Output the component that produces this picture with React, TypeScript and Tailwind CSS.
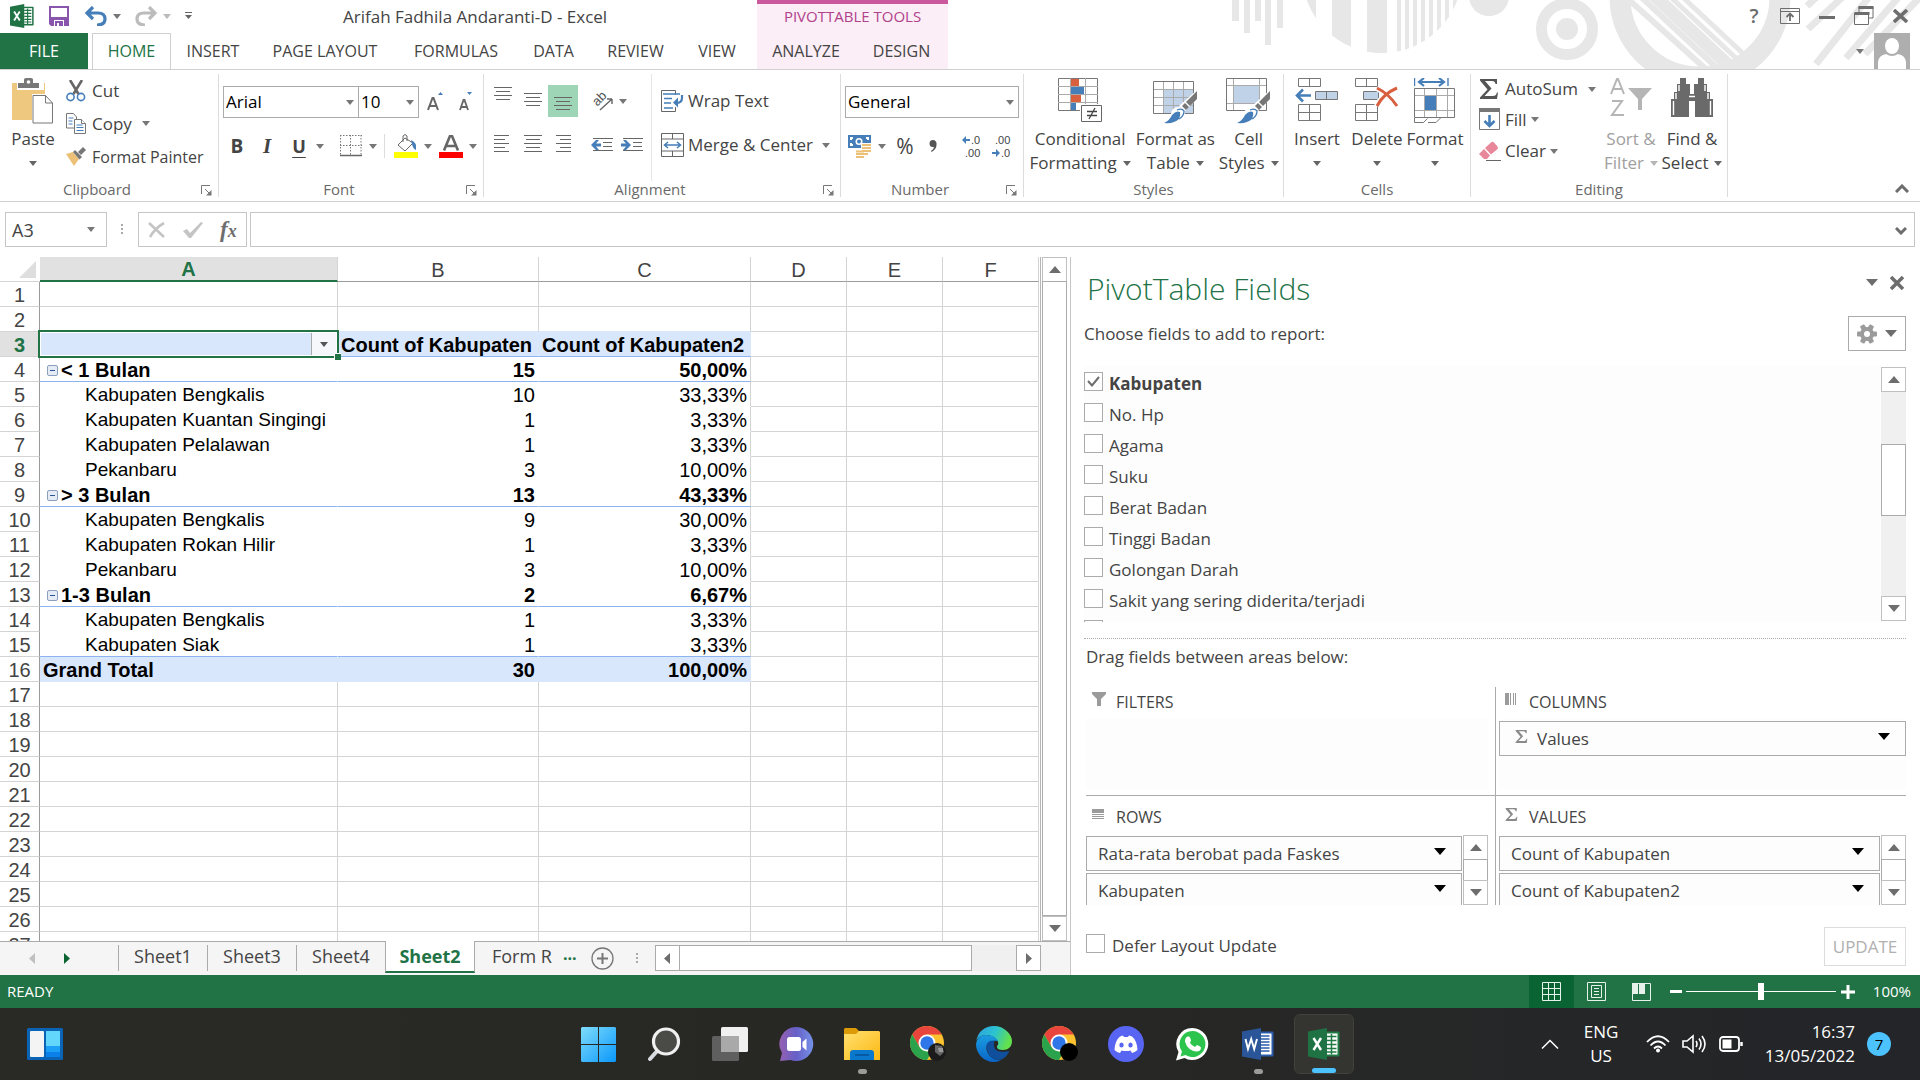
import React from "react";

/* ---------- small shared pieces ---------- */

function Caret({ className = "text-[#777]" }: { className?: string }) {
  return (
    <svg width="8" height="5" viewBox="0 0 8 5" className={`shrink-0 ${className}`} aria-hidden="true">
      <path d="M0 0h8L4 5z" fill="currentColor" />
    </svg>
  );
}

function BigCaret({ className = "text-[#6d6d6d]", up = false }: { className?: string; up?: boolean }) {
  return (
    <svg width="12" height="7" viewBox="0 0 12 7" className={`shrink-0 ${className}`} aria-hidden="true">
      <path d={up ? "M0 7h12L6 0z" : "M0 0h12L6 7z"} fill="currentColor" />
    </svg>
  );
}

function Launcher() {
  return (
    <button aria-label="More options" className="absolute right-[6px] bottom-[1px]">
      <svg width="11" height="11" viewBox="0 0 11 11" fill="none" stroke="#777" aria-hidden="true">
        <path d="M.5 9V.5H9M4 4l5 5" />
        <path d="M10.5 5v5.5H5z" fill="#777" stroke="none" />
      </svg>
    </button>
  );
}

function Group({ label, width, launcher = false, children }: { label: string; width: string; launcher?: boolean; children: React.ReactNode }) {
  return (
    <section aria-label={label} className={`relative flex h-[123px] shrink-0 flex-col border-r border-[#dcdcdc] ${width}`}>
      <div className="flex min-h-0 flex-1">{children}</div>
      <div className={`h-4 text-center text-[15px] leading-4 text-[#6a6a6a] ${launcher ? "pr-6" : ""}`}>{label}</div>
      {launcher && <Launcher />}
    </section>
  );
}

function Combo({ label, value, width }: { label: string; value: string; width: string }) {
  return (
    <div className={`relative h-8 ${width}`}>
      <select aria-label={label} className="h-full w-full appearance-none border border-[#ababab] bg-white pl-[2px] text-[17px] text-black">
        <option>{value}</option>
      </select>
      <span className="pointer-events-none absolute top-[14px] right-[5px]">
        <Caret />
      </span>
    </div>
  );
}

function Tall({ icon, lines, width, caret = "inline", muted = false }: { icon: React.ReactNode; lines: string[]; width: string; caret?: "inline" | "below"; muted?: boolean }) {
  return (
    <button className={`flex flex-col items-center pt-[4px] text-[17px] leading-6 ${width} ${muted ? "text-[#a0a0a0]" : "text-[#444]"}`}>
      <span className="flex h-[49px] items-start">{icon}</span>
      <span className="whitespace-nowrap">{lines[0]}</span>
      <span className="flex h-6 items-center gap-[6px] whitespace-nowrap">
        {caret === "inline" && lines[1]}
        <Caret className={muted ? "text-[#b5b5b5]" : "text-[#666]"} />
      </span>
    </button>
  );
}

function VSep() {
  return <span className="h-6 w-px shrink-0 bg-[#dcdcdc]" />;
}

/* ---------- application icons ---------- */

function OfficeIcon({ letter, dark, mid, size = 32 }: { letter: "X" | "W"; dark: string; mid: string; size?: number }) {
  return (
    <svg width={size} height={size} viewBox="0 0 32 32" aria-hidden="true">
      <rect x="15" y="3.5" width="16.5" height="25" rx="1" fill={mid} />
      <rect x="18" y="5.5" width="11.5" height="21" fill="#fff" />
      {letter === "X" ? (
        <path d="M19 8.500h9.500M19 12.500h9.500M19 16.500h9.500M19 20.500h9.500M19 24h9.500M23.500 6v20.500" stroke={mid} strokeWidth="1.5" />
      ) : (
        <path d="M19 8h8.500M19 11h8.500M19 14h8.500M19 17h8.500M19 20h8.500M19 23h8.500" stroke={mid} strokeWidth="1.4" />
      )}
      <path d="M0 3.500L19 0v32L0 28.500z" fill={dark} />
      {letter === "X" ? (
        <path d="M5.500 10l7.500 12M13 10L5.500 22" stroke="#fff" strokeWidth="2.400" />
      ) : (
        <path d="M3.500 11l2.500 10L9.200 11l3 10L15 11" stroke="#fff" strokeWidth="1.900" fill="none" />
      )}
    </svg>
  );
}

function PasteIcon() {
  return (
    <svg width="42" height="46" viewBox="0 0 42 46" aria-hidden="true">
      <path d="M0 5h33v37H0z" fill="#edc87e" />
      <path d="M5 4h27v8H5z" fill="#fff" />
      <path d="M6 10V5h6V1.500Q12 0 14 0h5q2 0 2 1.500V5h6v5z" fill="#777" />
      <circle cx="16.500" cy="4" r="1.800" fill="#fff" />
      <path d="M20 16h14l8 8v22H20z" fill="#fff" />
      <path d="M21 17.500h12.500l7 7.500v20H21zM33.500 17.500V25h7" fill="#fff" stroke="#777" />
    </svg>
  );
}

function CutIcon() {
  return (
    <svg width="20" height="22" viewBox="0 0 20 22" fill="none" aria-hidden="true">
      <path d="M4 0l8.500 14M16 0L7.500 14" stroke="#666" strokeWidth="2.600" />
      <circle cx="4.500" cy="17" r="3.600" stroke="#457eb8" strokeWidth="1.600" />
      <circle cx="15" cy="17" r="3.600" stroke="#457eb8" strokeWidth="1.600" />
    </svg>
  );
}

function CopyIcon() {
  return (
    <svg width="20" height="21" viewBox="0 0 20 21" fill="#fff" stroke="#777" aria-hidden="true">
      <path d="M.5.500h7l3 3.500v11H.5z" />
      <path d="M8.500 6.500h7l4 4v10h-11z" />
      <path d="M15.500 6.500v4h4" />
      <path d="M2.500 5h5M2.500 8h4M2.500 11h4M10.500 12h6M10.500 14.500h7M10.500 17.500h7" stroke="#457eb8" />
    </svg>
  );
}

function PainterIcon() {
  return (
    <svg width="20" height="19" viewBox="0 0 20 19" aria-hidden="true">
      <path d="M0 7l7-2 6 7-5 7z" fill="#edc078" />
      <path d="M7 5l2-2 7 7-2.500 2.500z" fill="#777" />
      <path d="M12 5l5-5 3 3-5 5z" fill="#777" />
    </svg>
  );
}

function Lines({ rows, width = 18, align = "center" }: { rows: number[]; width?: number; align?: "left" | "center" | "right" }) {
  return (
    <svg width={width} height={rows.length * 4} viewBox={`0 0 ${width} ${rows.length * 4}`} aria-hidden="true">
      {rows.map((w, i) => (
        <rect key={i} x={align === "left" ? 0 : align === "right" ? width - w : Math.floor((width - w) / 2)} y={i * 4} width={w} height="1" fill="#666" />
      ))}
    </svg>
  );
}

function IndentIcon({ dir }: { dir: "in" | "out" }) {
  return (
    <svg width="22" height="14" viewBox="0 0 22 14" aria-hidden="true">
      <path d="M2 .500h20M12 4.500h9M12 8.500h9M2 12.500h20" stroke="#666" />
      <path d={dir === "out" ? "M0 7l5-5h3L5 5.500h5v3H5L8 12H5z" : "M10 7L5 2H2l3 3.500H0v3h5L2 12h3z"} fill="#457eb8" />
    </svg>
  );
}

function OrientIcon() {
  return (
    <svg width="22" height="24" viewBox="0 0 22 24" aria-hidden="true">
      <text x="2" y="14" transform="rotate(-45 8 12)" fontSize="13" fontFamily="Liberation Sans, sans-serif" fill="#555">ab</text>
      <path d="M8 21L20 10M20 10h-5M20 10v5" stroke="#666" strokeWidth="1.400" fill="none" />
    </svg>
  );
}

function WrapIcon() {
  return (
    <svg width="23" height="23" viewBox="0 0 23 23" fill="none" aria-hidden="true">
      <path d="M14.500 5V.500H.500v21h14V17" stroke="#666" />
      <path d="M2 4h17M3 8.500h8M3 13h7M3 18h9" stroke="#457eb8" strokeWidth="1.400" />
      <path d="M21 5v3q0 5-6 5" stroke="#457eb8" strokeWidth="2.200" />
      <path d="M12 12.500l5-5v10z" fill="#457eb8" />
    </svg>
  );
}

function MergeIcon() {
  return (
    <svg width="24" height="24" viewBox="0 0 24 24" fill="none" aria-hidden="true">
      <path d="M.500.500h22v23H.500zM.500 6h22M.500 18h22M11.500.500V6M11.500 18v5.500" stroke="#666" />
      <path d="M3 12h17M7 9l-3.500 3L7 15M16 9l3.500 3L16 15" stroke="#457eb8" strokeWidth="1.500" />
    </svg>
  );
}

function BorderIcon() {
  return (
    <svg width="22" height="22" viewBox="0 0 22 22" fill="none" aria-hidden="true">
      <path d="M.500 0v20M21 0v20M0 .500h22M10.500 0v20M0 10.500h22" stroke="#777" strokeDasharray="1.500 1.500" />
      <path d="M0 20.500h22" stroke="#666" strokeWidth="1.500" />
    </svg>
  );
}

function BucketIcon() {
  return (
    <svg width="24" height="24" viewBox="0 0 24 24" aria-hidden="true">
      <path d="M11 4L4 11l7 6 8-8z" fill="#fff" stroke="#666" />
      <path d="M9 8V2q2-3 4 0v5" fill="none" stroke="#666" />
      <path d="M17 6q6 2 5 10-3-1-4-6z" fill="#457eb8" />
      <rect y="18" width="24" height="6" fill="#ff0" />
    </svg>
  );
}

function FontColorIcon() {
  return (
    <svg width="24" height="23" viewBox="0 0 24 23" aria-hidden="true">
      <path d="M5 15.500L11 1h2l6 14.500M7.500 11h9" fill="none" stroke="#666" strokeWidth="2.600" />
      <rect y="17" width="24" height="6" fill="#f00" />
    </svg>
  );
}

function MoneyIcon() {
  return (
    <svg width="23" height="23" viewBox="0 0 23 23" aria-hidden="true">
      <rect width="23" height="13" fill="#457eb8" />
      <path d="M2 2h3v2H4v1H2zM21 2h-3v2h1v1h2zM2 11h3V9H4V8H2z" fill="#fff" />
      <circle cx="11" cy="6.500" r="3.500" fill="#fff" />
      <circle cx="11" cy="6.500" r="2" fill="#457eb8" />
      <path d="M13 8h10v15H7v-8h6z" fill="#fff" />
      <path d="M14 10h9M14 13h9M14 16h9M14 19h6M8 16.500h8M8 19h8M8 22h8" stroke="#edc078" strokeWidth="2" />
    </svg>
  );
}

function DecimalIcon({ more }: { more: boolean }) {
  return (
    <svg width="20" height="28" viewBox="0 0 20 28" fontSize="11" fontFamily="Liberation Sans, sans-serif" fill="#444" aria-hidden="true">
      <text x={more ? 9 : 3} y="12">{more ? ".0" : ".00"}</text>
      <text x={more ? 3 : 9} y="25">{more ? ".00" : ".0"}</text>
      <path d={more ? "M0 8l4-4v3h4v2H4v3z" : "M8 21l-4-4v3H0v2h4v3z"} fill="#457eb8" />
    </svg>
  );
}

function CondIcon() {
  return (
    <svg width="44" height="44" viewBox="0 0 44 44" fill="none" aria-hidden="true">
      <path d="M.500.500h39v32H.500z" fill="#fff" stroke="#777" />
      <path d="M12.500 0v32M27.500 0v32M0 8.500h40M0 16.500h40M0 24.500h40" stroke="#aaa" />
      <path d="M13 1h8v7h-8zM13 17h10v7H13z" fill="#d9603f" />
      <path d="M13 9h13v7H13zM13 25h5v7h-5z" fill="#457eb8" />
      <path d="M22 26h22v18H22z" fill="#fff" />
      <path d="M23.500 27.500h20v16h-20z" fill="#fff" stroke="#666" />
      <path d="M29 33.500h10M29 37.500h10M37 30l-6 11" stroke="#444" strokeWidth="1.300" />
    </svg>
  );
}

function Brush() {
  return (
    <>
      <path d="M44 12v9L32 33l-6-5z" fill="#fff" />
      <path d="M44 13v8l-7 7-4-4z" fill="#777" />
      <path d="M32 25l4 4-3 3-4-4z" fill="#777" />
      <circle cx="25" cy="36" r="7" fill="#fff" />
      <path d="M24 32q5-2 7 1 0 5-5 8" fill="none" stroke="#457eb8" strokeWidth="1.300" />
      <path d="M11 45q6-3 8-8 4-5 8-3 1 3-1 7-5 5-15 4z" fill="#457eb8" />
    </>
  );
}

function FormatTableIcon() {
  return (
    <svg width="45" height="46" viewBox="0 0 45 46" fill="none" aria-hidden="true">
      <path d="M.500 3.500h40v32H.500z" fill="#fff" stroke="#777" />
      <path d="M11 12h29v23H11z" fill="#c0d2e8" />
      <path d="M10.500 4v31M20.500 4v31M30.500 4v31M1 11.500h39M1 19.500h39M1 27.500h39" stroke="#aaa" />
      <Brush />
    </svg>
  );
}

function CellStylesIcon() {
  return (
    <svg width="45" height="46" viewBox="0 0 45 46" fill="none" aria-hidden="true">
      <path d="M.500.500h40v32H.500z" fill="#fff" stroke="#777" />
      <path d="M7.500 1v31M33.500 1v31M1 7.500h39M1 25.500h39" stroke="#aaa" />
      <path d="M8 8h25v17H8z" fill="#c0d2e8" />
      <Brush />
    </svg>
  );
}

function InsertIcon() {
  return (
    <svg width="44" height="44" viewBox="0 0 44 44" fill="#fff" stroke="#777" aria-hidden="true">
      <path d="M3.500.500h22v8h-22zM14.500.500v8M3.500 26.500h22v16h-22zM14.500 26.500v16M3.500 34.500h22" />
      <path d="M20.500 13.500h22v8h-22zM31.500 13.500v8" fill="#c0d2e8" />
      <path d="M16 17.500H2M8 11.500l-6 6 6 6" fill="none" stroke="#457eb8" strokeWidth="2.600" />
    </svg>
  );
}

function DeleteIcon() {
  return (
    <svg width="44" height="44" viewBox="0 0 44 44" fill="#fff" stroke="#777" aria-hidden="true">
      <path d="M.500.500h22v8h-22zM11.500.500v8M.500 26.500h22v16h-22zM11.500 26.500v16M.500 34.500h22" />
      <path d="M8.500 13.500h15v8h-15z" fill="#c0d2e8" />
      <path d="M22 10q12 6 20 18M42 10Q28 16 22 28" fill="none" stroke="#fff" strokeWidth="6" />
      <path d="M22 10q12 6 20 18M42 10Q28 16 22 28" fill="none" stroke="#d9603f" strokeWidth="3" />
    </svg>
  );
}

function FormatIcon() {
  return (
    <svg width="42" height="46" viewBox="0 0 42 46" fill="none" aria-hidden="true">
      <path d="M.500 0v8M34 0v8" stroke="#457eb8" strokeWidth="1.400" />
      <path d="M5 4h25M10 0L5 4l5 4M25 0l5 4-5 4" stroke="#457eb8" strokeWidth="2.200" />
      <path d="M.500 10.500h40v29H.500z" fill="#fff" stroke="#777" />
      <path d="M10.500 11v28M22.500 11v28M33.500 11v28M1 17.500h39M1 32.500h39" stroke="#aaa" />
      <path d="M11 18h11v14H11z" fill="#457eb8" />
      <path d="M.500 40v4.500h9l4-4M14 44.500h8l5-5" stroke="#777" />
    </svg>
  );
}

function SortIcon() {
  return (
    <svg width="42" height="40" viewBox="0 0 42 40" fill="none" stroke="#b5b5b5" strokeWidth="2" aria-hidden="true">
      <path d="M1 16L7 1h1l6 15M3.500 11h8M2 23h10L2 37h12" />
      <path d="M18 10h24L32 21v11h-4V21z" fill="#b5b5b5" stroke="none" />
    </svg>
  );
}

function FindIcon() {
  return (
    <svg width="42" height="39" viewBox="0 0 42 39" fill="#6a6a6a" aria-hidden="true">
      <path d="M9 0h6v6h4v10h4V6h4V0h6v6h3v8h3v7h3v18H24V23h-6v16H0V21h3v-7h3V6h3z" />
      <path d="M8 7v6M5 15v6M2.500 23v14M34 7v6M37 15v6M39.500 23v14M18 18.500h6" stroke="#fff" strokeWidth="1.400" />
    </svg>
  );
}

function SigmaIcon({ size, color }: { size: number; color: string }) {
  return (
    <svg width={size} height={size} viewBox="0 0 18 20" fill={color} aria-hidden="true">
      <path d="M0 0h17v5h-1.500Q15 2 12 2H5l6.500 7.500L4.500 17H13q3 0 4-3.500h1L17 20H0v-1.500L7.500 10.500 0 1.500z" />
    </svg>
  );
}

function FillIcon() {
  return (
    <svg width="22" height="23" viewBox="0 0 22 23" fill="none" aria-hidden="true">
      <path d="M.500.500h20v21H.500z" fill="#fff" stroke="#777" />
      <path d="M0 0h21v4H0z" fill="#777" />
      <path d="M10.500 7v11M5.500 13l5 5 5-5" stroke="#457eb8" strokeWidth="2.600" />
    </svg>
  );
}

function EraserIcon() {
  return (
    <svg width="22" height="20" viewBox="0 0 22 20" aria-hidden="true">
      <path d="M12 1.500q1.500-1.500 3 0l3.500 4q1 1.500 0 2.500L12 13.500 6 7z" fill="#e8869a" />
      <path d="M5 8l6 6.500L8 18H5l-5-5z" fill="#e8869a" />
      <path d="M7 19.500h15" stroke="#666" />
    </svg>
  );
}

/* ---------- header ---------- */

function Decoration() {
  return (
    <svg className="pointer-events-none absolute top-0 right-0" width="700" height="69" viewBox="1220 0 700 69" aria-hidden="true">
      <defs>
        <clipPath id="discA"><circle cx="1382" cy="-27" r="80" /></clipPath>
        <clipPath id="discB"><circle cx="1700" cy="-3" r="70" /></clipPath>
      </defs>
      <g fill="#e7e7e7">
        <path d="M1232 0h7v21h-7zM1244 0h6v33h-6zM1255 0h6v21h-6zM1265 0h6v45h-6zM1277 0h6v28h-6z" />
        <path clipPath="url(#discA)" d="M1300 0h16v60h-16zM1332 0h19v60h-19zM1367 0h20v60h-20zM1397 0h4v60h-4zM1405 0h4v60h-4zM1413 0h4v60h-4zM1421 0h4v60h-4zM1429 0h4v60h-4zM1437 0h4v60h-4zM1445 0h4v60h-4zM1453 0h4v60h-4z" />
        <circle cx="1489" cy="-4" r="20" />
        <circle cx="1567" cy="29" r="11" />
      </g>
      <g fill="none" stroke="#e7e7e7">
        <circle cx="1567" cy="29" r="25.500" strokeWidth="11" />
        <circle cx="1700" cy="-3" r="80" strokeWidth="21" />
        <g clipPath="url(#discB)">
          <path d="M1618-10l100 90M1638-6l96 90" strokeWidth="6" />
          <path d="M1646-12l96 90" strokeWidth="13" />
          <path d="M1663-10l90 84M1675-10l90 84" strokeWidth="5" />
        </g>
        <g strokeWidth="7">
          <path d="M1822-8l-15 14M1848-8l-40 37M1873-8l-57 72M1903-8l-57 66M1925-8l-60 62" />
        </g>
      </g>
    </svg>
  );
}

const TABS: [string, string][] = [
  ["INSERT", "w-[84px]"],
  ["PAGE LAYOUT", "w-[140px]"],
  ["FORMULAS", "w-[122px]"],
  ["DATA", "w-[73px]"],
  ["REVIEW", "w-[91px]"],
  ["VIEW", "w-[72px]"],
];

function Header() {
  return (
    <header className="relative flex h-[70px] shrink-0 border-b border-[#d0d0d0] text-[#444]">
      <Decoration />
      <div className="flex w-[757px] shrink-0 flex-col">
        <div className="flex h-[33px] items-center pl-[10px]">
          <OfficeIcon letter="X" dark="#217346" mid="#217346" size={24} />
          <div className="ml-[15px] flex w-[294px] items-center">
            <button aria-label="Save">
              <svg width="20" height="20" viewBox="0 0 20 20" aria-hidden="true">
                <path d="M0 0h20v20H2l-2-2z" fill="#8a56ad" />
                <path d="M2 2h16v9H2zM5 14h10v6H5z" fill="#fff" />
                <path d="M6 15h8v5H6z" fill="#8a56ad" />
                <path d="M8 17h2v3H8z" fill="#fff" />
              </svg>
            </button>
            <button aria-label="Undo" className="ml-4 flex items-center gap-[6px]">
              <svg width="22" height="20" viewBox="0 0 22 20" fill="none" stroke="#457eb8" strokeWidth="3.200" aria-hidden="true">
                <path d="M2 7h11q7 0 7 6t-8 6M8 1L2 7l6 6" />
              </svg>
              <Caret />
            </button>
            <button aria-label="Redo" className="ml-[14px] flex items-center gap-[6px]">
              <svg width="22" height="20" viewBox="0 0 22 20" fill="none" stroke="#bcbcbc" strokeWidth="3.200" aria-hidden="true">
                <path d="M20 7H9q-7 0-7 6t8 6M14 1l6 6-6 6" />
              </svg>
              <Caret className="text-[#bcbcbc]" />
            </button>
            <button aria-label="Customize toolbar" className="ml-[14px]">
              <svg width="7" height="8" viewBox="0 0 7 8" fill="#666" aria-hidden="true">
                <path d="M0 0h7v1H0zM0 3h7L3.500 7z" />
              </svg>
            </button>
          </div>
          <h1 className="whitespace-nowrap text-[17px]">Arifah Fadhila Andaranti-D - Excel</h1>
        </div>
        <nav className="flex h-[37px] text-[16px]">
          <button className="w-[88px] bg-[#217346] text-white">FILE</button>
          <button className="ml-1 w-[79px] border border-b-0 border-[#d0d0d0] bg-white text-[#217346]">HOME</button>
          {TABS.map(([t, w]) => (
            <button key={t} className={`h-9 whitespace-nowrap ${w}`}>{t}</button>
          ))}
        </nav>
      </div>
      <div className="flex w-[191px] shrink-0 flex-col border-t-4 border-[#c9589c] bg-[#fbeef6]">
        <div className="flex h-[29px] items-center justify-center pb-1 text-[15px] text-[#b0418a]">PIVOTTABLE TOOLS</div>
        <div className="flex h-9 text-[16px]">
          <button className="w-[98px]">ANALYZE</button>
          <button className="w-[93px]">DESIGN</button>
        </div>
      </div>
      <div className="relative flex flex-1 flex-col items-end">
        <div className="flex h-[31px] items-center gap-[19px] pr-[12px] text-[#6d6d6d]">
          <button aria-label="Help" className="w-[14px] text-[20px] font-semibold leading-none">?</button>
          <button aria-label="Ribbon display options">
            <svg width="20" height="16" viewBox="0 0 20 16" fill="none" stroke="#6d6d6d" aria-hidden="true">
              <path d="M.500.500h19v15H.500zM.500 3.500h19" />
              <path d="M10 13V6M6.500 9L10 5.500 13.500 9" strokeWidth="1.800" />
            </svg>
          </button>
          <button aria-label="Minimize" className="pt-1">
            <svg width="16" height="4" aria-hidden="true"><path d="M0 0h16v3H0z" fill="#6d6d6d" /></svg>
          </button>
          <button aria-label="Restore">
            <svg width="20" height="19" viewBox="0 0 20 19" fill="none" stroke="#6d6d6d" aria-hidden="true">
              <path d="M5 6V1h14v11h-4" />
              <path d="M4.500 1.500h15M.500 7.500h15" strokeWidth="3" />
              <path d="M.500 7v11.500h14V7" />
            </svg>
          </button>
          <button aria-label="Close">
            <svg width="15" height="14" viewBox="0 0 15 14" stroke="#6d6d6d" strokeWidth="3.500" aria-hidden="true"><path d="M1 1l13 12M14 1L1 13" /></svg>
          </button>
        </div>
        <button aria-label="Account" className="mt-[2px] flex h-9 items-center gap-[10px] pr-[10px]">
          <Caret />
          <svg width="36" height="36" viewBox="0 0 36 36" aria-hidden="true">
            <path d="M0 0h36v36H0z" fill="#aeaeae" />
            <ellipse cx="18" cy="13" rx="7" ry="8" fill="#fff" />
            <path d="M4 36V29q1-7 8-8 6 4 12 0 7 1 8 8v7z" fill="#fff" />
          </svg>
        </button>
      </div>
    </header>
  );
}

/* ---------- ribbon ---------- */

function Ribbon() {
  return (
    <div className="flex h-[132px] shrink-0 items-start border-b border-[#d0d0d0] pt-1 text-[17px] text-[#444]">
      <Group label="Clipboard" width="w-[219px]" launcher>
        <div className="flex pl-1">
          <Tall icon={<PasteIcon />} lines={["Paste"]} width="w-[58px]" caret="below" />
        </div>
        <div className="flex flex-col pl-1">
          <button className="flex h-[33px] items-center gap-[6px]"><CutIcon />Cut</button>
          <button className="flex h-[33px] items-center gap-[6px]"><CopyIcon />Copy<span className="ml-1"><Caret /></span></button>
          <button className="flex h-[33px] items-center gap-[6px] whitespace-nowrap text-[16px]"><PainterIcon />Format Painter</button>
        </div>
      </Group>

      <Group label="Font" width="w-[265px]" launcher>
        <div className="flex w-full flex-col pt-3 pl-1">
          <div className="flex h-8 items-center">
            <Combo label="Font" value="Arial" width="w-[136px]" />
            <div className="-ml-px"><Combo label="Font size" value="10" width="w-[61px]" /></div>
            <button aria-label="Increase font size" className="ml-2 flex w-[17px] items-start">
              <svg width="17" height="22" viewBox="0 0 17 22" fill="none" aria-hidden="true">
                <path d="M1 19L5.500 7h1L11 19M3 15h6" stroke="#666" strokeWidth="2" />
                <path d="M11 4h5l-2.500-3z" fill="#457eb8" />
              </svg>
            </button>
            <button aria-label="Decrease font size" className="ml-[15px] flex items-start">
              <svg width="14" height="22" viewBox="0 0 14 22" fill="none" aria-hidden="true">
                <path d="M1 19L4.500 9h1L9 19M2.500 16h5" stroke="#666" strokeWidth="1.800" />
                <path d="M8 1h5l-2.500 3z" fill="#457eb8" />
              </svg>
            </button>
          </div>
          <div className="mt-3 flex h-8 items-center">
            <button aria-label="Bold" className="w-7 text-[19px] leading-6 font-bold">B</button>
            <button aria-label="Italic" className="w-8 font-['Liberation_Serif',serif] text-[21px] leading-6 font-bold italic">I</button>
            <button aria-label="Underline" className="mr-px w-8 text-[18px] leading-6 font-bold underline underline-offset-4">U</button>
            <Caret />
            <span className="ml-[7px]"><VSep /></span>
            <button aria-label="Borders" className="mr-[7px] ml-[9px] flex items-center gap-[7px]"><BorderIcon /><Caret /></button>
            <VSep />
            <button aria-label="Fill color" className="ml-[9px] flex items-center gap-[6px]"><BucketIcon /><Caret /></button>
            <button aria-label="Font color" className="ml-[7px] flex items-center gap-[6px]"><FontColorIcon /><Caret /></button>
          </div>
        </div>
      </Group>

      <Group label="Alignment" width="w-[357px]" launcher>
        <div className="flex w-[168px] flex-col border-r border-[#e6e6e6] pt-[11px] pl-[10px]">
          <div className="flex h-8 items-center">
            <button aria-label="Top align" className="pb-3"><Lines rows={[18, 14, 18, 14]} /></button>
            <button aria-label="Middle align" className="ml-3"><Lines rows={[18, 14, 18, 14]} /></button>
            <button aria-label="Bottom align" className="ml-[6px] flex h-8 w-[30px] items-end justify-center bg-[#9fd5b7] pb-1"><Lines rows={[18, 14, 18, 14]} /></button>
            <span className="mr-[10px] ml-1"><VSep /></span>
            <button aria-label="Orientation" className="flex items-center gap-[5px]"><OrientIcon /><Caret /></button>
          </div>
          <div className="mt-3 flex h-8 items-center">
            <button aria-label="Align left"><Lines rows={[15, 11, 15, 11, 15]} align="left" /></button>
            <button aria-label="Center" className="ml-3"><Lines rows={[18, 14, 18, 14, 18]} /></button>
            <button aria-label="Align right" className="ml-[11px]"><Lines rows={[15, 11, 15, 11, 15]} align="right" /></button>
            <span className="mr-2 ml-3"><VSep /></span>
            <button aria-label="Decrease indent"><IndentIcon dir="out" /></button>
            <button aria-label="Increase indent" className="ml-2"><IndentIcon dir="in" /></button>
          </div>
        </div>
        <div className="flex flex-col pt-[11px] pl-[9px]">
          <button className="flex h-8 items-center gap-1 whitespace-nowrap"><WrapIcon />Wrap Text</button>
          <button className="mt-3 flex h-8 items-center gap-[3px] whitespace-nowrap"><MergeIcon />Merge &amp; Center<span className="ml-[6px]"><Caret /></span></button>
        </div>
      </Group>

      <Group label="Number" width="w-[183px]" launcher>
        <div className="flex w-full flex-col pt-3 pl-1">
          <Combo label="Number format" value="General" width="w-[174px]" />
          <div className="mt-3 flex h-8 items-center">
            <button aria-label="Accounting format" className="ml-[3px] flex items-center gap-[7px]"><MoneyIcon /><Caret /></button>
            <button aria-label="Percent" className="ml-[9px] w-5 text-[21px] leading-6">%</button>
            <button aria-label="Comma style" className="ml-[14px]">
              <svg width="8" height="12" viewBox="0 0 8 12" fill="#555" aria-hidden="true"><path d="M4 0a3.500 3.500 0 0 0 0 7h1q0 2-3 4l.500 1Q8 9 7.500 4A3.500 3.500 0 0 0 4 0z" /></svg>
            </button>
            <span className="mr-[10px] ml-[15px]"><VSep /></span>
            <button aria-label="Increase decimal"><DecimalIcon more /></button>
            <button aria-label="Decrease decimal" className="ml-[10px]"><DecimalIcon more={false} /></button>
          </div>
        </div>
      </Group>

      <Group label="Styles" width="w-[260px]">
        <Tall icon={<CondIcon />} lines={["Conditional", "Formatting"]} width="w-[113px]" />
        <Tall icon={<FormatTableIcon />} lines={["Format as", "Table"]} width="w-[78px]" />
        <Tall icon={<CellStylesIcon />} lines={["Cell", "Styles"]} width="w-[69px]" />
      </Group>

      <Group label="Cells" width="w-[187px]">
        <Tall icon={<InsertIcon />} lines={["Insert"]} width="w-[66px]" caret="below" />
        <Tall icon={<DeleteIcon />} lines={["Delete"]} width="w-[54px]" caret="below" />
        <Tall icon={<FormatIcon />} lines={["Format"]} width="w-[62px]" caret="below" />
      </Group>

      <Group label="Editing" width="w-[257px]">
        <div className="flex w-[128px] flex-col pl-2">
          <button className="flex h-[30px] items-center gap-[6px] whitespace-nowrap"><span className="flex w-5 justify-center"><SigmaIcon size={20} color="#555" /></span>AutoSum<span className="ml-1"><Caret /></span></button>
          <button className="flex h-[31px] items-center gap-1"><FillIcon />Fill<Caret /></button>
          <button className="flex h-[32px] items-center gap-1"><EraserIcon />Clear<Caret /></button>
        </div>
        <Tall icon={<SortIcon />} lines={["Sort &", "Filter"]} width="w-[64px]" muted />
        <Tall icon={<FindIcon />} lines={["Find &", "Select"]} width="w-[58px]" />
      </Group>
      <button aria-label="Collapse ribbon" className="mr-[11px] mb-2 ml-auto self-end">
        <svg width="14" height="9" viewBox="0 0 14 9" fill="none" stroke="#6d6d6d" strokeWidth="3" aria-hidden="true"><path d="M1 8l6-6 6 6" /></svg>
      </button>
    </div>
  );
}

function FormulaBar() {
  return (
    <div className="flex shrink-0 items-center px-[5px] py-[10px]">
      <div className="relative h-[35px] w-[102px] border border-[#c6c6c6]">
        <input aria-label="Name box" defaultValue="A3" className="h-full w-full pl-[6px] text-[18px] text-[#444] outline-none" />
        <span className="absolute top-[14px] right-[11px]"><Caret /></span>
      </div>
      <svg width="3" height="11" className="mx-[14px]" fill="#aaa" aria-hidden="true"><path d="M0 0h2v2H0zM0 4h2v2H0zM0 8h2v2H0z" /></svg>
      <div className="flex h-[35px] w-[109px] items-center gap-[17px] border border-[#c6c6c6] pl-[9px]">
        <button aria-label="Cancel"><svg width="18" height="16" viewBox="0 0 18 16" stroke="#c4c4c4" strokeWidth="2.600" aria-hidden="true"><path d="M1 1l15 14M16 1Q7 6 2 15" fill="none" /></svg></button>
        <button aria-label="Enter"><svg width="20" height="16" viewBox="0 0 20 16" aria-hidden="true"><path d="M0 9l4-2 3 4L18 0l2 1L8 16H6z" fill="#c4c4c4" /></svg></button>
        <button aria-label="Insert function" className="font-['Liberation_Serif',serif] text-[23px] leading-none font-bold text-[#6d6d6d] italic">f<span className="text-[18px]">x</span></button>
      </div>
      <div className="relative ml-[3px] h-[35px] flex-1 border border-[#c6c6c6]">
        <input aria-label="Formula" className="h-full w-full pr-8 pl-2 outline-none" />
        <svg width="12" height="8" viewBox="0 0 12 8" className="absolute top-[14px] right-[7px]" fill="none" stroke="#6d6d6d" strokeWidth="3" aria-hidden="true"><path d="M1 1l5 5 5-5" /></svg>
      </div>
    </div>
  );
}

/* ---------- worksheet ---------- */

type Kind = "head" | "group" | "item" | "last" | "total";
const PIVOT: Record<number, { kind: Kind; cells: [string, string, string] }> = {
  3: { kind: "head", cells: ["", "Count of Kabupaten", "Count of Kabupaten2"] },
  4: { kind: "group", cells: ["< 1 Bulan", "15", "50,00%"] },
  5: { kind: "item", cells: ["Kabupaten Bengkalis", "10", "33,33%"] },
  6: { kind: "item", cells: ["Kabupaten Kuantan Singingi", "1", "3,33%"] },
  7: { kind: "item", cells: ["Kabupaten Pelalawan", "1", "3,33%"] },
  8: { kind: "item", cells: ["Pekanbaru", "3", "10,00%"] },
  9: { kind: "group", cells: ["> 3 Bulan", "13", "43,33%"] },
  10: { kind: "item", cells: ["Kabupaten Bengkalis", "9", "30,00%"] },
  11: { kind: "item", cells: ["Kabupaten Rokan Hilir", "1", "3,33%"] },
  12: { kind: "item", cells: ["Pekanbaru", "3", "10,00%"] },
  13: { kind: "group", cells: ["1-3 Bulan", "2", "6,67%"] },
  14: { kind: "item", cells: ["Kabupaten Bengkalis", "1", "3,33%"] },
  15: { kind: "last", cells: ["Kabupaten Siak", "1", "3,33%"] },
  16: { kind: "total", cells: ["Grand Total", "30", "100,00%"] },
};

const KIND_STYLE: Record<Kind, string> = {
  head: "border-b-[#8db3f0] bg-[#d9e7fd] font-bold",
  group: "border-b-[#8db3f0] font-bold",
  item: "border-b-white",
  last: "border-b-[#8db3f0]",
  total: "border-b-[#d9e7fd] bg-[#d9e7fd] font-bold",
};

function PivotCell({ row, col }: { row: number; col: number }) {
  const { kind, cells } = PIVOT[row];
  const filled = kind === "head" || kind === "total";
  const plain = kind === "item" || kind === "last";
  const right = filled ? "border-r-[#d9e7fd]" : col === 2 ? "border-r-[#d4d4d4]" : kind === "item" ? "border-r-white" : "border-r-transparent";
  const base = `relative h-[25px] border-r border-b px-0 pt-[2px] pb-0 leading-[22px] whitespace-nowrap ${KIND_STYLE[kind]} ${right}`;
  if (kind === "head" && col === 0) {
    return (
      <td className={base}>
        <span className="absolute -top-[2px] -right-[2px] -bottom-[2px] -left-[2px] z-10 flex justify-end border-2 border-[#217346] bg-[#d9e7fd]">
          <span className="absolute inset-0 border border-white" />
          <button aria-label="Filter rows" className="relative m-px flex w-[25px] items-center justify-center border-l border-[#ababab] bg-[#f5f7fa]"><Caret className="text-[#555]" /></button>
          <span className="absolute -right-[4px] -bottom-[4px] h-[7px] w-[7px] border-t border-l border-white bg-[#217346]" />
        </span>
      </td>
    );
  }
  if (col === 0) {
    return (
      <td className={`${base} ${plain ? "pl-[45px] text-[19px]" : kind === "total" ? "pl-[3px]" : "pl-[7px]"}`}>
        {kind === "group" ? (
          <span className="flex items-center gap-[3px]">
            <button aria-label="Collapse group" className="flex h-[11px] w-[11px] items-center justify-center rounded-[2px] border border-[#8ba0bd] bg-[#e6ecf5]"><span className="h-px w-[5px] bg-[#2b5797]" /></button>
            {cells[0]}
          </span>
        ) : cells[0]}
      </td>
    );
  }
  return <td className={`${base} ${kind === "head" ? "pl-[3px]" : "pr-[3px] text-right"}`}>{cells[col]}</td>;
}

function Sheet() {
  const rows = Array.from({ length: 27 }, (_, i) => i + 1);
  return (
    <div className="min-h-0 min-w-0 flex-1 overflow-hidden border-r border-[#b5b5b5]">
      <table className="table-fixed border-separate border-spacing-0 font-['Liberation_Sans',sans-serif] text-[20px] text-black">
        <colgroup>
          <col className="w-[40px]" /><col className="w-[298px]" /><col className="w-[201px]" /><col className="w-[212px]" />
          <col className="w-[96px]" /><col className="w-[96px]" /><col className="w-[96px]" />
        </colgroup>
        <thead>
          <tr>
            <th className="h-[25px] border-b border-[#d4d4d4] p-0">
              <svg width="17" height="17" viewBox="0 0 17 17" className="ml-[19px]" aria-hidden="true"><path d="M17 0v17H0z" fill="#dedede" /></svg>
            </th>
            <th className="h-[25px] border-r border-b-2 border-r-[#d4d4d4] border-b-[#217346] bg-[#e1e1e1] px-0 pt-[2px] pb-0 leading-[21px] text-[#217346]">A</th>
            {["B", "C", "D", "E", "F"].map((c) => (
              <th key={c} className="h-[25px] border-r border-b border-r-[#d4d4d4] border-b-[#9b9b9b] px-0 pt-[2px] pb-0 leading-[22px] font-normal text-[#444]">{c}</th>
            ))}
          </tr>
        </thead>
        <tbody>
          {rows.map((r) => (
            <tr key={r}>
              <th className={`h-[25px] border-r border-b border-r-[#9b9b9b] border-b-[#d4d4d4] px-0 pt-[2px] pb-0 leading-[22px] ${r === 3 ? "bg-[#e1e1e1] text-[#217346]" : "font-normal text-[#444]"}`}>{r}</th>
              {[0, 1, 2, 3, 4, 5].map((c) =>
                c < 3 && PIVOT[r] ? (
                  <PivotCell key={c} row={r} col={c} />
                ) : (
                  <td key={c} className={`h-[25px] border-r border-b border-r-[#d4d4d4] p-0 ${r === 2 && c < 3 ? "border-b-[#d9e7fd]" : "border-b-[#d4d4d4]"}`} />
                )
              )}
            </tr>
          ))}
        </tbody>
      </table>
    </div>
  );
}

function ScrollButton({ dir, className = "" }: { dir: "up" | "down"; className?: string }) {
  return (
    <button aria-label={`Scroll ${dir}`} className={`flex h-[25px] w-full shrink-0 items-center justify-center border border-[#c0c0c0] bg-white ${className}`}>
      <BigCaret up={dir === "up"} />
    </button>
  );
}

function SheetTabs() {
  return (
    <div className="flex h-[34px] shrink-0 items-start border-t border-[#ababab] bg-[#f5f5f5] text-[18px] text-[#444]">
      <div className="flex h-8 w-[118px] items-center pl-[29px]">
        <button aria-label="Previous sheet"><svg width="6" height="11" aria-hidden="true"><path d="M6 0v11L0 5.500z" fill="#c0c0c0" /></svg></button>
        <button aria-label="Next sheet" className="ml-[29px]"><svg width="6" height="11" aria-hidden="true"><path d="M0 0v11l6-5.500z" fill="#0a6332" /></svg></button>
      </div>
      {["Sheet1", "Sheet3", "Sheet4"].map((s) => (
        <button key={s} className="mt-[3px] h-[26px] w-[89px] border-l border-[#ababab] pb-1 leading-[22px]">{s}</button>
      ))}
      <button className="-mt-px h-8 w-[90px] border-r border-b-2 border-l border-r-[#ababab] border-b-[#217346] border-l-[#ababab] bg-white pb-px leading-6 font-bold text-[#217346]">Sheet2</button>
      <button className="ml-[17px] h-7 whitespace-nowrap">Form R</button>
      <span className="ml-[11px] h-7 w-3 text-[16px] font-bold text-[#217346]">...</span>
      <button aria-label="New sheet" className="mt-[5px] ml-4">
        <svg width="23" height="23" viewBox="0 0 23 23" fill="none" stroke="#777" strokeWidth="1.300" aria-hidden="true"><circle cx="11.500" cy="11.500" r="10.500" /><path d="M6 11.500h11M11.500 6v11" strokeWidth="2" /></svg>
      </button>
      <svg width="2" height="11" className="mt-[11px] mr-[17px] ml-[22px]" fill="#aaa" aria-hidden="true"><path d="M0 0h2v2H0zM0 4h2v2H0zM0 8h2v2H0z" /></svg>
      <div className="mt-[3px] mr-[29px] flex h-[26px] flex-1 bg-[#f0f0f0]">
        <button aria-label="Scroll left" className="flex w-[25px] items-center justify-center border border-[#ababab] bg-white"><svg width="6" height="11" aria-hidden="true"><path d="M6 0v11L0 5.500z" fill="#6d6d6d" /></svg></button>
        <div className="flex flex-1"><div className="w-[87%] border border-l-0 border-[#ababab] bg-white" /></div>
        <button aria-label="Scroll right" className="flex w-[25px] items-center justify-center border border-[#ababab] bg-white"><svg width="6" height="11" aria-hidden="true"><path d="M0 0v11l6-5.500z" fill="#6d6d6d" /></svg></button>
      </div>
    </div>
  );
}

/* ---------- PivotTable pane ---------- */

function Check({ id, label, checked = false, gap = "gap-[6px]" }: { id: string; label: string; checked?: boolean; gap?: string }) {
  return (
    <div className={`flex h-[31px] items-center text-[17px] text-[#444] ${gap} ${checked ? "font-bold" : ""}`}>
      <span className="relative mb-[7px] h-[19px] w-[19px]">
        <input id={id} type="checkbox" defaultChecked={checked} className="peer block h-[19px] w-[19px] appearance-none border border-[#ababab] bg-white" />
        <svg className="pointer-events-none absolute top-[4px] left-[3px] hidden peer-checked:block" width="13" height="11" viewBox="0 0 13 11" fill="none" stroke="#6d6d6d" strokeWidth="2" aria-hidden="true"><path d="M1 5l4 4.500L12 1" /></svg>
      </span>
      <label htmlFor={id} className="pb-px">{label}</label>
    </div>
  );
}

function FieldButton({ children }: { children: React.ReactNode }) {
  return (
    <button className="flex h-[35px] w-full shrink-0 items-center border border-[#ababab] bg-[#fdfdfd] pr-[15px] pl-[11px] text-left">
      {children}
      <span className="mb-1 ml-auto"><BigCaret className="text-black" /></span>
    </button>
  );
}

function MiniScroll() {
  return (
    <div className="flex h-[70px] w-[25px] shrink-0 flex-col">
      <ScrollButton dir="up" />
      <div className="-mt-px flex-1 border border-[#ababab] bg-white" />
      <ScrollButton dir="down" className="-mt-px" />
    </div>
  );
}

function AreaTitle({ icon, children }: { icon: React.ReactNode; children: React.ReactNode }) {
  return (
    <div className="flex h-8 items-center pb-[2px] text-[16px]">
      <span className="mb-[6px] flex w-[30px] pl-[6px]">{icon}</span>
      {children}
    </div>
  );
}

const FIELDS = ["No. Hp", "Agama", "Suku", "Berat Badan", "Tinggi Badan", "Golongan Darah", "Sakit yang sering diderita/terjadi", ""];

function Pane() {
  return (
    <aside className="flex w-[850px] shrink-0 flex-col border-l border-[#c6c6c6] pr-[14px] pl-[13px] text-[17px] text-[#444]">
      <div className="flex h-[59px] items-center pl-[3px]">
        <h2 className="pt-1 text-[30px] leading-9 font-light text-[#217346]">PivotTable Fields</h2>
        <button aria-label="Pane options" className="mb-2 ml-auto"><BigCaret /></button>
        <button aria-label="Close pane" className="mb-2 ml-3 pr-[2px]"><svg width="14" height="14" viewBox="0 0 14 14" stroke="#6d6d6d" strokeWidth="3.500" aria-hidden="true"><path d="M1 1l12 12M13 1L1 13" /></svg></button>
      </div>
      <div className="flex h-[35px] items-center">
        Choose fields to add to report:
        <button aria-label="Tools" className="ml-auto flex h-[35px] w-[58px] items-center justify-center gap-2 border border-[#ababab]">
          <svg width="20" height="20" viewBox="-10 -10 20 20" aria-hidden="true">
            <g fill="#9b9b9b">
              {[0, 60, 120].map((a) => <rect key={a} x="-2.500" y="-10" width="5" height="20" rx="1" transform={`rotate(${a + 30})`} />)}
              <circle r="7" />
            </g>
            <circle r="3" fill="#fff" />
          </svg>
          <BigCaret />
        </button>
      </div>
      <div className="mt-[15px] flex h-[256px] shrink-0 overflow-hidden bg-[#fdfdfd]">
        <div className="flex-1 pt-[3px]">
          <Check id="kabupaten" label="Kabupaten" checked />
          {FIELDS.map((f, i) => <Check key={i} id={`field-${i}`} label={f} />)}
        </div>
        <div className="mt-px mb-px flex w-[25px] flex-col bg-[#f0f0f0]">
          <ScrollButton dir="up" />
          <div className="mt-[52px] h-[72px] border border-[#ababab] bg-white" />
          <ScrollButton dir="down" className="mt-auto" />
        </div>
      </div>
      <div className="mt-4 border-t border-dotted border-[#ababab]" />
      <p className="mt-1 pl-[2px] leading-7">Drag fields between areas below:</p>
      <div className="mt-4 ml-[2px] grid h-[218px] shrink-0 grid-cols-2 overflow-hidden">
        <div className="flex h-[109px] flex-col border-r border-b border-[#ababab] pr-[7px] pb-[6px]">
          <AreaTitle icon={<svg width="14" height="14" aria-hidden="true"><path d="M0 0h14v2L9 7v7H5V7L0 2z" fill="#9b9b9b" /></svg>}>FILTERS</AreaTitle>
          <div className="flex-1 bg-[#fdfdfd]" />
        </div>
        <div className="flex h-[109px] flex-col border-b border-[#ababab] pb-[6px] pl-[3px]">
          <AreaTitle icon={<svg width="12" height="12" aria-hidden="true"><path d="M0 0h4v12H0zM5 0h1v12H5zM8 0h1v12H8zM10 0h1v12h-1z" fill="#9b9b9b" /></svg>}>COLUMNS</AreaTitle>
          <div className="flex-1 bg-[#fdfdfd] pt-[2px]">
            <FieldButton><span className="mb-1 flex w-[26px] pl-1"><SigmaIcon size={13} color="#8a8a8a" /></span>Values</FieldButton>
          </div>
        </div>
        <div className="flex h-[109px] flex-col border-r border-[#ababab] pr-[7px]">
          <div className="pt-[6px]"><AreaTitle icon={<svg width="12" height="11" aria-hidden="true"><path d="M0 0h12v4H0zM0 5h12v1H0zM0 7h12v1H0zM0 9h12v1H0z" fill="#9b9b9b" /></svg>}>ROWS</AreaTitle></div>
          <div className="mt-px flex min-h-0 gap-px overflow-hidden">
            <div className="flex flex-1 flex-col gap-[2px] pt-px"><FieldButton>Rata-rata berobat pada Faskes</FieldButton><FieldButton>Kabupaten</FieldButton></div>
            <MiniScroll />
          </div>
        </div>
        <div className="flex h-[109px] flex-col pl-[3px]">
          <div className="pt-[6px]"><AreaTitle icon={<SigmaIcon size={13} color="#8a8a8a" />}>VALUES</AreaTitle></div>
          <div className="mt-px flex min-h-0 gap-px overflow-hidden">
            <div className="flex flex-1 flex-col gap-[2px] pt-px"><FieldButton>Count of Kabupaten</FieldButton><FieldButton>Count of Kabupaten2</FieldButton></div>
            <MiniScroll />
          </div>
        </div>
      </div>
      <div className="mt-[22px] ml-[2px] flex items-center justify-between">
        <Check id="defer" label="Defer Layout Update" gap="gap-[7px]" />
        <button disabled className="h-[39px] w-[82px] border border-[#dcdcdc] text-[#b0b0b0]">UPDATE</button>
      </div>
    </aside>
  );
}

/* ---------- status bar and taskbar ---------- */

function StatusBar() {
  return (
    <footer className="flex h-[33px] shrink-0 items-center bg-[#217346] pr-[9px] pl-[7px] text-[15px] text-white">
      <span>READY</span>
      <button aria-label="Normal view" className="ml-auto flex h-full w-[45px] items-center justify-center bg-[#0a6332]">
        <svg width="19" height="19" viewBox="0 0 19 19" fill="none" stroke="#e6f2ea" aria-hidden="true"><path d="M.500.500h18v18H.500zM6.500 0v19M12.500 0v19M0 6.500h19M0 12.500h19" /></svg>
      </button>
      <button aria-label="Page layout view" className="flex h-full w-[45px] items-center justify-center">
        <svg width="19" height="19" viewBox="0 0 19 19" fill="none" stroke="#e6f2ea" aria-hidden="true"><path d="M.500.500h18v18H.500zM4.500 3.500h10v12h-10zM7 6.500h5M7 9.500h5M7 12.500h5" /></svg>
      </button>
      <button aria-label="Page break view" className="flex h-full w-[45px] items-center justify-center">
        <svg width="19" height="18" viewBox="0 0 19 18" fill="none" stroke="#e6f2ea" aria-hidden="true"><path d="M.500.500h18v17H.500z" /><path d="M0 0h6v11H0zM7 0h6v11H7z" fill="#e6f2ea" stroke="none" /></svg>
      </button>
      <button aria-label="Zoom out" className="ml-[6px]"><svg width="12" height="4" aria-hidden="true"><path d="M0 0h12v3H0z" fill="#fff" /></svg></button>
      <input type="range" aria-label="Zoom" defaultValue={50} className="mx-1 h-[17px] w-[150px] appearance-none bg-transparent [&::-webkit-slider-runnable-track]:h-px [&::-webkit-slider-runnable-track]:bg-white [&::-webkit-slider-thumb]:-mt-2 [&::-webkit-slider-thumb]:h-[17px] [&::-webkit-slider-thumb]:w-[6px] [&::-webkit-slider-thumb]:appearance-none [&::-webkit-slider-thumb]:bg-white" />
      <button aria-label="Zoom in" className="ml-px"><svg width="14" height="14" aria-hidden="true"><path d="M5.500 0h3v5.500H14v3H8.500V14h-3V8.500H0v-3h5.500z" fill="#fff" /></svg></button>
      <span className="ml-4 w-10 text-right">100%</span>
    </footer>
  );
}

function Chrome({ badge }: { badge: "ball" | "black" }) {
  return (
    <svg width="36" height="36" viewBox="0 0 36 36" aria-hidden="true">
      <circle cx="17" cy="17" r="17" fill="#fbc12e" />
      <path d="M2.300 8.500A17 17 0 0 1 31.700 8.500H17L9.600 21.200z" fill="#e8453c" />
      <path d="M2.300 8.500L9.600 21.200 17 25.500 17 34A17 17 0 0 1 2.300 8.500z" fill="#2ba24c" />
      <path d="M17 34l7.400-12.700L17 25.500l-4-1z" fill="#2ba24c" />
      <circle cx="17" cy="17" r="8.500" fill="#fff" />
      <circle cx="17" cy="17" r="6.700" fill="#2f76e8" />
      {badge === "black" ? <circle cx="27" cy="26" r="9" fill="#000" /> : (
        <g><circle cx="27" cy="26" r="9" fill="#1b1b1b" /><path d="M25 19l7 1 2 6-4 4-5-4z" fill="#666" /><path d="M28 22h5v4h-4z" fill="#999" /></g>
      )}
    </svg>
  );
}

const APPS: { name: string; icon: React.ReactNode; state?: "open" | "active" }[] = [
  {
    name: "Start",
    icon: (
      <svg width="35" height="35" viewBox="0 0 35 35" aria-hidden="true">
        <defs><linearGradient id="win" x1="0" y1="0" x2="1" y2="1"><stop offset="0" stopColor="#7fdcfb" /><stop offset="1" stopColor="#0a98fb" /></linearGradient></defs>
        <path d="M1 0h16v17H0V1zM18 0h16l1 1v16H18zM0 18h17v17H1l-1-1zM18 18h17v16l-1 1H18z" fill="url(#win)" />
      </svg>
    ),
  },
  {
    name: "Search",
    icon: (
      <svg width="33" height="35" viewBox="0 0 33 35" aria-hidden="true">
        <path d="M10 23l-8 9" stroke="#d8dce0" strokeWidth="4" strokeLinecap="round" />
        <circle cx="18" cy="14.500" r="12.500" fill="#4a4a47" stroke="#f0f0f0" strokeWidth="3.200" />
      </svg>
    ),
  },
  {
    name: "Task view",
    icon: (
      <svg width="36" height="34" viewBox="0 0 36 34" aria-hidden="true">
        <rect y="9" width="27" height="25" rx="1.500" fill="#5f5f5f" />
        <rect x="9" width="27" height="25" rx="1.500" fill="#f0f0f0" />
        <path d="M9 9h18v16H9z" fill="#a9a9a9" />
      </svg>
    ),
  },
  {
    name: "Chat",
    icon: (
      <svg width="35" height="35" viewBox="0 0 35 35" aria-hidden="true">
        <defs><linearGradient id="chat" x1="0" y1="0" x2="1" y2="0"><stop offset="0" stopColor="#9560b0" /><stop offset=".5" stopColor="#6660c8" /><stop offset="1" stopColor="#7592e8" /></linearGradient></defs>
        <path d="M17.500 0a17 17 0 1 1-6 33L1 34l2-8A17 17 0 0 1 17.500 0z" fill="url(#chat)" />
        <rect x="8" y="10" width="14" height="14" rx="2.500" fill="#fff" />
        <path d="M23.500 15l4-3.500v12l-4-3.500z" fill="#fff" />
      </svg>
    ),
  },
  {
    name: "File Explorer",
    state: "open",
    icon: (
      <svg width="36" height="34" viewBox="0 0 36 34" aria-hidden="true">
        <defs><linearGradient id="fold" x1="0" y1="0" x2="1" y2="1"><stop offset="0" stopColor="#ffe070" /><stop offset="1" stopColor="#fdb813" /></linearGradient></defs>
        <path d="M1 1h11l4 4v6H0V2z" fill="#dd9a08" />
        <path d="M0 7h12l3-3h20l1 1v28H0z" fill="url(#fold)" />
        <path d="M6 33v-7q0-3 3-3h18q3 0 3 3v7z" fill="#0a78cc" />
        <path d="M11 28h14" stroke="#064f94" strokeWidth="1.500" />
      </svg>
    ),
  },
  { name: "Chrome", icon: <Chrome badge="ball" /> },
  {
    name: "Edge",
    icon: (
      <svg width="36" height="36" viewBox="0 0 36 36" aria-hidden="true">
        <defs>
          <linearGradient id="edgeTop" x1="0" y1="0" x2="1" y2=".3"><stop offset="0" stopColor="#2f9fe0" /><stop offset=".55" stopColor="#2bc3d2" /><stop offset="1" stopColor="#62e04e" /></linearGradient>
          <linearGradient id="edgeLow" x1="0" y1="0" x2="0" y2="1"><stop offset="0" stopColor="#1a9de0" /><stop offset="1" stopColor="#0a66c8" /></linearGradient>
        </defs>
        <path d="M0 16C2 5 9 0 18 0c10 0 18 8 18 15 0 6-4 9-9 9-4 0-6-1-6-3s2-2 1-5c-2-5-7-7-12-7C5 9 1 12 0 16z" fill="url(#edgeTop)" />
        <path d="M0 18C1 12 5 9 10 9c6 0 11 3 12 6-10-2-13 5-11 10 2 6 8 10 14 9-2 1-4 2-7 2C8 36 0 28 0 18z" fill="url(#edgeLow)" />
        <path d="M10.500 20c0-4 4-6 8-5-2 7 1 13 15 10-3 6-7 9-11 9-7 0-12-7-12-14z" fill="#104f9c" />
      </svg>
    ),
  },
  { name: "Chrome profile", icon: <Chrome badge="black" /> },
  {
    name: "Discord",
    icon: (
      <svg width="36" height="36" viewBox="0 0 36 36" aria-hidden="true">
        <circle cx="18" cy="18" r="18" fill="#5865f2" />
        <path d="M12 10.500l3-1 1 1.500h4l1-1.500 3 1q5 4 5.500 13.500-3 2.500-5.500 3l-1.500-2.500q-4.500 1-9 0L12 27q-3-.500-5.500-3Q7 14.500 12 10.500z" fill="#fff" />
        <ellipse cx="13.500" cy="19" rx="2.200" ry="2.600" fill="#5865f2" /><ellipse cx="22.500" cy="19" rx="2.200" ry="2.600" fill="#5865f2" />
      </svg>
    ),
  },
  {
    name: "WhatsApp",
    icon: (
      <svg width="33" height="33" viewBox="0 0 33 33" aria-hidden="true">
        <path d="M16.500 0a16 16 0 1 1-8 30L0 32.500 2.500 24A16 16 0 0 1 16.500 0z" fill="#fff" />
        <path d="M16.500 3a13 13 0 1 1-7 24L4.500 28.500 6 23.500A13 13 0 0 1 16.500 3z" fill="#2dc44e" />
        <path d="M11.500 8.500q2-.500 2.500 1l1 2.500q.300 1-1.200 2.500 2 3.500 5.200 4.500l2-2q3.500 1 4 2.500 0 4-4.500 4-9-1-11.500-10 0-4 2.500-5z" fill="#fff" />
      </svg>
    ),
  },
  { name: "Word", state: "open", icon: <OfficeIcon letter="W" dark="#2a5699" mid="#2a5caa" /> },
  { name: "Excel", state: "active", icon: <OfficeIcon letter="X" dark="#1f7244" mid="#1f7a45" /> },
];

function Taskbar() {
  return (
    <nav aria-label="Taskbar" className="grid h-[72px] shrink-0 grid-cols-[1fr_auto_1fr] items-center bg-linear-to-r from-[#292a25] via-[#272824] to-[#242529] text-white">
      <button aria-label="Widgets" className="justify-self-start pl-[27px]">
        <svg width="36" height="32" viewBox="0 0 36 32" aria-hidden="true">
          <rect width="36" height="32" rx="1.500" fill="#0a63b5" />
          <rect x="3" y="3" width="14" height="26" rx="1" fill="#f4f4f4" />
          <path d="M19 3h14v15H19z" fill="#62d6fb" /><path d="M19 18h14v6H19z" fill="#1ca0f5" /><path d="M19 24h14v5H19z" fill="#0a80e8" />
        </svg>
      </button>
      <div className="flex gap-[6px] pl-[2px]">
        {APPS.map((a) => (
          <button key={a.name} aria-label={a.name} className={`relative flex h-[60px] w-[60px] items-center justify-center rounded-md ${a.state === "active" ? "border border-[#40413d] bg-[#343530]" : ""}`}>
            {a.icon}
            {a.state === "open" && <span className="absolute bottom-0 h-[5px] w-[9px] rounded-full bg-[#9b9b99]" />}
            {a.state === "active" && <span className="absolute bottom-0 h-[5px] w-6 rounded-full bg-[#4cc2ff]" />}
          </button>
        ))}
      </div>
      <div className="flex items-center justify-self-end pr-[29px] text-[17px] leading-6">
        <button aria-label="Show hidden icons"><svg width="18" height="10" viewBox="0 0 18 10" fill="none" stroke="#fff" strokeWidth="1.500" aria-hidden="true"><path d="M1 9.500l8-8 8 8" /></svg></button>
        <div className="ml-5 w-11 text-center"><div>ENG</div><div>US</div></div>
        <button aria-label="Network, sound, battery" className="ml-[23px] flex items-center gap-3">
          <svg width="24" height="18" viewBox="0 0 24 18" fill="none" stroke="#fff" strokeWidth="1.800" aria-hidden="true"><path d="M1 7q11-11.500 22 0M4.500 10.500q7.500-8 15 0M8 13.500q4-4 8 0" /><circle cx="12" cy="15.500" r="2" fill="#fff" stroke="none" /></svg>
          <svg width="25" height="20" viewBox="0 0 25 20" fill="none" stroke="#fff" strokeWidth="1.600" aria-hidden="true"><path d="M1 7h4l6-5v16l-6-5H1zM14 7q2 3 0 6M17 4.500q4 5.500 0 11M20 2q6 8 0 16" /></svg>
          <svg width="24" height="16" viewBox="0 0 24 16" fill="none" stroke="#fff" strokeWidth="1.800" aria-hidden="true"><rect x="1" y="1" width="19" height="14" rx="3" /><path d="M3.500 3.500h9v9h-9z" fill="#fff" stroke="none" /><path d="M22.500 6v4" strokeWidth="2.500" /></svg>
        </button>
        <div className="ml-[18px] w-[94px] text-right whitespace-nowrap"><div>16:37</div><div>13/05/2022</div></div>
        <span className="ml-3 flex h-6 w-6 items-center justify-center rounded-full bg-[#4cc2ff] text-[15px] text-black">7</span>
      </div>
    </nav>
  );
}

export default function App() {
  return (
    <div className="flex h-screen flex-col overflow-hidden bg-white font-['Open_Sans',sans-serif]">
      <Header />
      <Ribbon />
      <FormulaBar />
      <main className="flex min-h-0 flex-1">
        <div className="flex min-w-0 flex-1 flex-col">
          <div className="flex min-h-0 flex-1">
            <Sheet />
            <div className="mr-[3px] ml-px flex w-[25px] shrink-0 flex-col bg-[#f0f0f0]">
              <ScrollButton dir="up" />
              <div className="-mt-px h-[93%] min-h-0 border border-[#ababab] bg-white" />
              <ScrollButton dir="down" className="mt-auto" />
            </div>
          </div>
          <SheetTabs />
        </div>
        <Pane />
      </main>
      <StatusBar />
      <Taskbar />
    </div>
  );
}
